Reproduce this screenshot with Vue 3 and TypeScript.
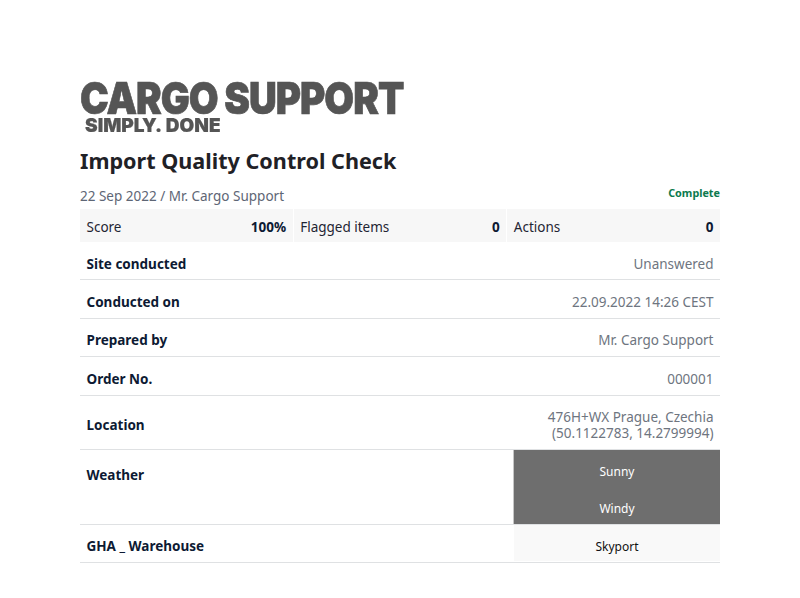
<script setup lang="ts">
interface Row { label: string; value: string[] }
const stats = [
  { label: 'Score', value: '100%' },
  { label: 'Flagged items', value: '0' },
  { label: 'Actions', value: '0' },
]
const rows: Row[] = [
  { label: 'Site conducted', value: ['Unanswered'] },
  { label: 'Conducted on', value: ['22.09.2022 14:26 CEST'] },
  { label: 'Prepared by', value: ['Mr. Cargo Support'] },
  { label: 'Order No.', value: ['000001'] },
  { label: 'Location', value: ['476H+WX Prague, Czechia', '(50.1122783, 14.2799994)'] },
]
</script>

<template>
  <main class="page">
    <div class="logo">
      <div class="logo-main">CARGO SUPPORT</div>
      <div class="logo-sub">SIMPLY. DONE</div>
    </div>
    <h1 class="title">Import Quality Control Check</h1>
    <div class="meta">
      <span>22 Sep 2022 / Mr. Cargo Support</span>
      <span class="status">Complete</span>
    </div>
    <div class="stats">
      <div v-for="s in stats" :key="s.label" class="stat">
        <span>{{ s.label }}</span>
        <b>{{ s.value }}</b>
      </div>
    </div>
    <div v-for="r in rows" :key="r.label" class="row" :class="{ tall: r.value.length > 1 }">
      <div class="label">{{ r.label }}</div>
      <div class="value">
        <div v-for="line in r.value" :key="line">{{ line }}</div>
      </div>
    </div>
    <div class="row choice-row weather">
      <div class="label">Weather</div>
      <div class="chips dark">
        <div>Sunny</div>
        <div>Windy</div>
      </div>
    </div>
    <div class="row choice-row gha">
      <div class="label">GHA _ Warehouse</div>
      <div class="chips light">
        <div>Skyport</div>
      </div>
    </div>
  </main>
</template>

<style>
html, body { margin: 0; background: #fff; }
</style>

<style scoped>
.page {
  box-sizing: border-box;
  width: 800px;
  height: 598px;
  padding: 80px 80px 0;
  font-family: "Noto Sans", "Open Sans", sans-serif;
}
.logo {
  height: 56px;
  color: #555;
  font-family: Inter, "Liberation Sans", sans-serif;
  font-weight: 900;
  white-space: nowrap;
  filter: blur(0.4px);
}
.logo-main {
  font-size: 38.5px;
  line-height: 34px;
  letter-spacing: -1px;
  -webkit-text-stroke: 0.6px #555;
  transform: translateY(-2px) scaleY(1.15);
  transform-origin: left top;
}
.logo-sub {
  margin: 2px 0 0 5px;
  font-size: 19px;
  line-height: 20px;
  letter-spacing: 0;
  word-spacing: 1px;
  -webkit-text-stroke: 0.2px #555;
}
.title {
  margin: 10px 0 0;
  font-size: 21.6px;
  line-height: 30px;
  font-weight: 700;
  color: #1f2126;
}
.meta {
  display: flex;
  justify-content: space-between;
  height: 23px;
  margin-top: 10px;
  font-size: 13.5px;
  line-height: 21px;
  color: #5e6675;
}
.status {
  font-size: 10.8px;
  font-weight: 700;
  line-height: 13px;
  color: #0d7a4e;
}
.stats {
  display: grid;
  grid-template-columns: repeat(3, 1fr);
  column-gap: 1px;
  height: 33px;
}
.stat {
  display: flex;
  justify-content: space-between;
  align-items: center;
  padding: 2px 6.5px 0;
  background: #f7f7f7;
  font-size: 13.5px;
  color: #1f2533;
}
.stat b { color: #0d1a33; }
.row {
  box-sizing: border-box;
  display: flex;
  justify-content: space-between;
  align-items: center;
  min-height: 38.4px;
  padding: 6px 6.5px 0;
  border-bottom: 1px solid #dfe1e3;
  font-size: 13.5px;
}
.tall { min-height: 54px; }
.label {
  font-weight: 700;
  color: #0d1a33;
}
.value {
  text-align: right;
  line-height: 16px;
  color: #6e7580;
}
.choice-row {
  padding: 0 0 0 6.5px;
  align-items: flex-start;
}
.weather { height: 75px; }
.weather .label { margin-top: 16px; }
.gha { height: 37.4px; }
.gha .label { margin-top: 12px; }
.chips {
  box-sizing: border-box;
  width: 207px;
  text-align: center;
  font-size: 12px;
}
.chips > div { height: 37px; line-height: 43px; }
.dark { background: #6e6e6e; color: #fff; height: 74px; border-left: 1px solid #c6c6c6; }
.light { background: #f9f9f9; color: #111; height: 36px; border-left: 1px solid #fff; }
.light > div { height: 36px; line-height: 43px; }
</style>
